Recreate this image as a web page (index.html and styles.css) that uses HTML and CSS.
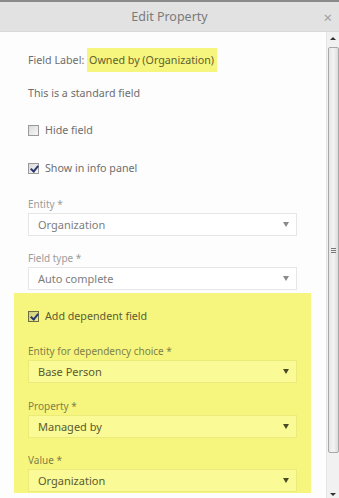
FILE: index.html
```html
<!DOCTYPE html>
<html lang="en">
<head>
  <meta charset="UTF-8" />
  <meta name="viewport" content="width=device-width, initial-scale=1" />
  <title>Edit Property</title>
  <link rel="stylesheet" href="styles.css">
</head>
<body>

  <div class="dialog">
    <div class="dialog-header">
      <span class="dialog-title">Edit Property</span>
      <span class="close">&times;</span>
    </div>

    <div class="dialog-main">
      <div class="content">
        <div class="section">
          <p class="field-label">Field Label: <span class="mark">Owned by (Organization)</span></p>
          <p class="note">This is a standard field</p>

          <label class="check check-hide"><span class="box"></span>Hide field</label>
          <label class="check check-show"><span class="box checked"></span>Show in info panel</label>

          <div class="group group-entity">
            <div class="label">Entity *</div>
            <div class="select">Organization<span class="arrow"></span></div>
          </div>
          <div class="group">
            <div class="label">Field type *</div>
            <div class="select">Auto complete<span class="arrow"></span></div>
          </div>
        </div>

        <div class="section highlight">
          <label class="check check-dep"><span class="box checked"></span>Add dependent field</label>

          <div class="group group-dep">
            <div class="label">Entity for dependency choice *</div>
            <div class="select">Base Person<span class="arrow"></span></div>
          </div>
          <div class="group group-prop">
            <div class="label">Property *</div>
            <div class="select">Managed by<span class="arrow"></span></div>
          </div>
          <div class="group">
            <div class="label">Value *</div>
            <div class="select">Organization<span class="arrow"></span></div>
          </div>
        </div>
      </div>

      <div class="scrollbar">
        <span class="scroll-up"></span>
        <div class="thumb"><span class="grip"></span></div>
        <span class="scroll-down"></span>
      </div>
    </div>
  </div>

</body>
</html>
```

FILE: styles.css
```css
* {
  box-sizing: border-box;
}

body {
  margin: 0;
  font-family: 'Noto Sans', sans-serif;
  font-size: 10.7px;
  color: #6e6e6e;
  background: #fdfdfd;
}

.dialog {
  width: 339px;
  height: 498px;
  display: flex;
  flex-direction: column;
  overflow: hidden;
}

.dialog-header {
  height: 32px;
  flex: none;
  border-top: 2px solid #8a8a8a;
  background: #e2e2e2;
  border-bottom: 1px solid #d8d8d8;
  display: flex;
  align-items: center;
  justify-content: center;
  position: relative;
}

.dialog-title {
  font-size: 12.5px;
  color: #7a7a7a;
}

.close {
  position: absolute;
  right: 7px;
  top: 5px;
  font-size: 15px;
  color: #a0a0a0;
}

.dialog-main {
  flex: 1;
  display: flex;
  min-height: 0;
}

.content {
  flex: 1;
  padding: 0 15px 0 14px;
}

.section {
  padding: 0 14px;
}

p {
  margin: 0;
}

.field-label {
  margin-top: 16px;
  height: 24px;
  line-height: 24px;
}

.mark {
  background: #f6f67e;
  color: #60602e;
  padding: 5px 3px 5px 2px;
}

.note {
  margin-top: 13px;
  line-height: 16px;
}

.check {
  display: flex;
  align-items: center;
  gap: 6px;
  height: 16px;
}

.check-hide {
  margin-top: 21px;
}

.check-show {
  margin-top: 22px;
}

.box {
  width: 11px;
  height: 11px;
  border: 1px solid #9a9a9a;
  background: linear-gradient(135deg, #dadada, #f8f8f8);
  position: relative;
}

.box.checked::after {
  content: "";
  position: absolute;
  left: 3px;
  top: 0;
  width: 3px;
  height: 6px;
  border: solid #2a3a70;
  border-width: 0 2px 2px 0;
  transform: rotate(40deg);
}

.group {
  margin-top: 15px;
}

.group-entity {
  margin-top: 21px;
}

.label {
  font-size: 10px;
  color: #9c9c9c;
  line-height: 14px;
}

.select {
  margin-top: 2px;
  height: 23px;
  border: 1px solid #e6e6e6;
  background: #fff;
  color: #7d7d7d;
  font-size: 11px;
  padding: 0 9px;
  display: flex;
  align-items: center;
  justify-content: space-between;
}

.arrow {
  width: 0;
  height: 0;
  border-left: 3px solid transparent;
  border-right: 3px solid transparent;
  border-top: 5px solid #8a8a8a;
  margin-right: -2px;
}

.highlight {
  margin-top: 3px;
  background: #f6f67f;
  height: 200px;
  padding-top: 15px;
  color: #5c5c34;
}

.highlight .group-dep {
  margin-top: 20px;
}

.highlight .group-prop {
  margin-top: 16px;
}

.highlight .label {
  color: #7f7f48;
}

.highlight .select {
  background: #fafa96;
  border-color: #ebeb7a;
  color: #5a5a30;
}

.highlight .arrow {
  border-top-color: #4a4a28;
}

.highlight .box {
  border-color: #6e6e40;
  background: linear-gradient(135deg, #cdcd78, #efef90);
}

.scrollbar {
  width: 13px;
  background: #f1f1f1;
  border-left: 1px solid #e4e4e4;
  display: flex;
  flex-direction: column;
  align-items: center;
  padding: 5px 0 2px;
}

.scroll-up,
.scroll-down {
  width: 0;
  height: 0;
  border-left: 3px solid transparent;
  border-right: 3px solid transparent;
}

.scroll-up {
  border-bottom: 3px solid #333;
}

.scroll-down {
  border-top: 3px solid #333;
  margin-top: auto;
}

.thumb {
  margin-top: 7px;
  width: 11px;
  height: 406px;
  border: 1px solid #a8a8a8;
  border-radius: 2px;
  background: linear-gradient(90deg, #e6e6e6, #f3f3f3 50%, #dcdcdc);
  display: flex;
  align-items: center;
  justify-content: center;
}

.grip {
  width: 5px;
  height: 5px;
  border-top: 1px solid #777;
  border-bottom: 1px solid #777;
  position: relative;
}

.grip::after {
  content: "";
  position: absolute;
  left: 0;
  right: 0;
  top: 1px;
  border-top: 1px solid #777;
}
```
